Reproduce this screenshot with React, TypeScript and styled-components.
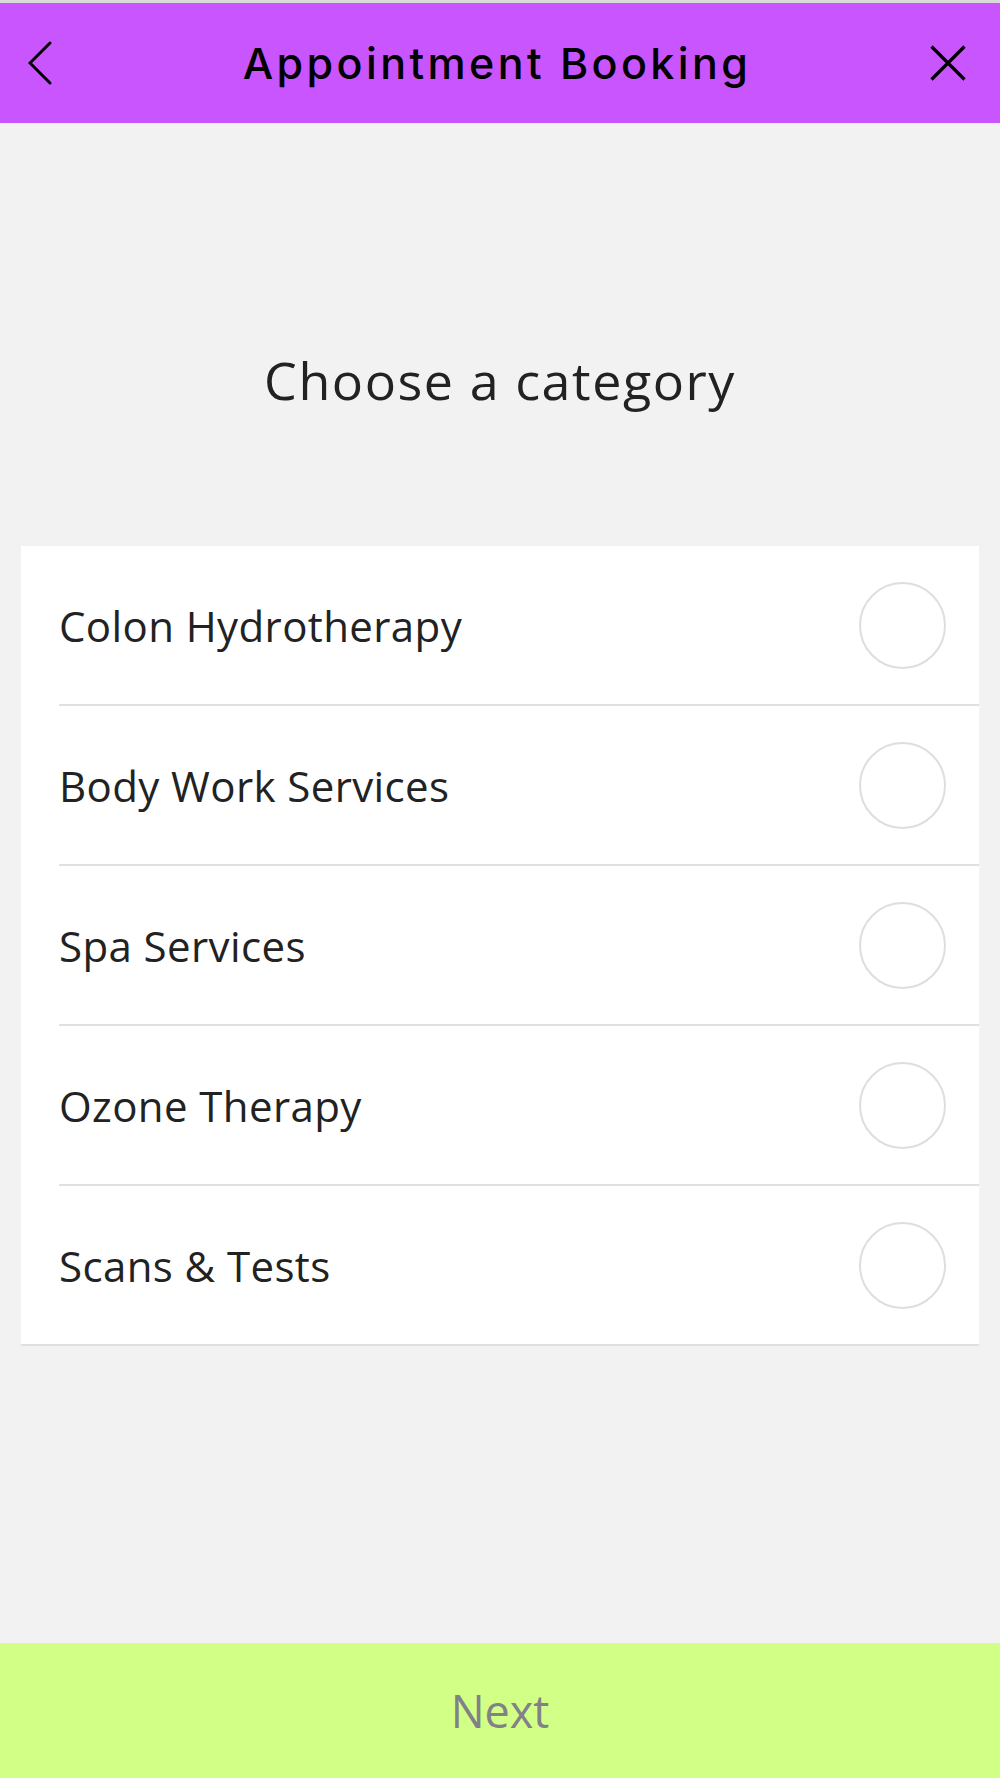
import React, { useState } from "react";
import styled, { createGlobalStyle } from "styled-components";

const GlobalStyle = createGlobalStyle`
  html, body {
    margin: 0;
    padding: 0;
    background: #f2f2f2;
  }
  * {
    box-sizing: border-box;
  }
`;

const Screen = styled.div`
  display: flex;
  flex-direction: column;
  min-height: 100vh;
  background: #f2f2f2;
  font-family: "Open Sans", "Liberation Sans", sans-serif;
  color: #222222;
`;

const Header = styled.header`
  display: flex;
  align-items: center;
  justify-content: space-between;
  height: 123px;
  padding: 0 34px 0 28px;
  border-top: 3px solid #d9d9d9;
  background: #c955fe;
`;

const IconButton = styled.button<{ $end?: boolean }>`
  display: flex;
  align-items: center;
  justify-content: ${(p) => (p.$end ? "flex-end" : "flex-start")};
  width: 40px;
  height: 50px;
  padding: 0;
  border: none;
  background: none;
  cursor: pointer;
`;

const HeaderTitle = styled.h1`
  margin: 0;
  font-family: Inter, "Liberation Sans", sans-serif;
  font-size: 43px;
  font-weight: 500;
  letter-spacing: 3.4px;
  color: #000000;
`;

const Main = styled.main`
  flex: 1;
  display: flex;
  flex-direction: column;
  align-items: center;
  padding: 225px 21px 0;
`;

const Heading = styled.h2`
  margin: 0 0 134px;
  font-size: 52px;
  line-height: 64px;
  font-weight: 400;
  letter-spacing: 1.55px;
  color: #222222;
`;

const Card = styled.ul`
  width: 100%;
  margin: 0;
  padding: 0;
  list-style: none;
  background: #ffffff;
  border-bottom: 2px solid #e0e0e0;
`;

const Row = styled.li<{ $last?: boolean }>`
  display: flex;
  align-items: center;
  justify-content: space-between;
  height: ${(p) => (p.$last ? "158px" : "160px")};
  margin-left: 38px;
  padding-right: 33px;
  border-bottom: ${(p) => (p.$last ? "none" : "2px solid #e0e0e0")};
  cursor: pointer;
`;

const Label = styled.span`
  font-size: 42px;
  letter-spacing: 0.4px;
  color: #222222;
`;

const Radio = styled.span<{ $checked: boolean }>`
  width: 87px;
  height: 87px;
  border-radius: 50%;
  border: 2px solid ${(p) => (p.$checked ? "#c955fe" : "#dedede")};
  background: ${(p) => (p.$checked ? "#c955fe" : "#ffffff")};
`;

const NextBar = styled.button`
  display: flex;
  align-items: center;
  justify-content: center;
  width: 100%;
  height: 135px;
  padding: 0;
  border: none;
  background: #d2ff85;
  font-family: "Open Sans", "Liberation Sans", sans-serif;
  font-size: 45px;
  color: #818187;
  cursor: pointer;
`;

const categories = [
  "Colon Hydrotherapy",
  "Body Work Services",
  "Spa Services",
  "Ozone Therapy",
  "Scans & Tests",
];

export default function App() {
  const [selected, setSelected] = useState<number | null>(null);

  return (
    <Screen>
      <GlobalStyle />
      <Header>
        <IconButton aria-label="Back">
          <svg width="26" height="46" viewBox="0 0 26 46">
            <polyline
              points="22,3 2,23 22,43"
              fill="none"
              stroke="#000"
              strokeWidth="3"
              strokeLinecap="round"
              strokeLinejoin="miter"
            />
          </svg>
        </IconButton>
        <HeaderTitle>Appointment Booking</HeaderTitle>
        <IconButton aria-label="Close" $end>
          <svg width="36" height="36" viewBox="0 0 36 36">
            <path
              d="M1.5 1.5 L34.5 34.5 M34.5 1.5 L1.5 34.5"
              stroke="#000"
              strokeWidth="3.2"
            />
          </svg>
        </IconButton>
      </Header>
      <Main>
        <Heading>Choose a category</Heading>
        <Card>
          {categories.map((c, i) => (
            <Row
              key={c}
              $last={i === categories.length - 1}
              onClick={() => setSelected(i)}
            >
              <Label>{c}</Label>
              <Radio $checked={selected === i} />
            </Row>
          ))}
        </Card>
      </Main>
      <NextBar>Next</NextBar>
    </Screen>
  );
}
